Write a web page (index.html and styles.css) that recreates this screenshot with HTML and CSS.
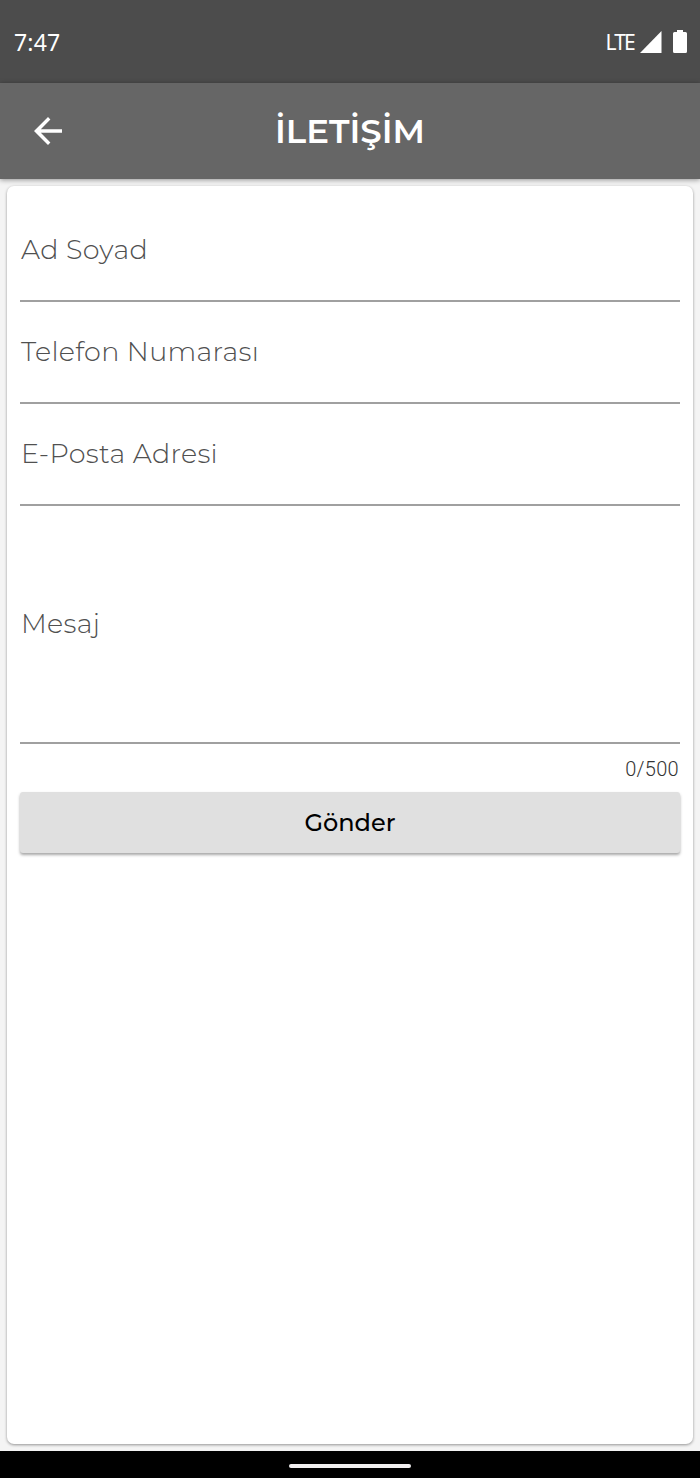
FILE: index.html
```html
<!DOCTYPE html>
<html lang="tr">

<head>
  <meta charset="UTF-8" />
  <title>İletişim</title>
  <link rel="stylesheet" href="styles.css">
</head>

<body>
  <div class="status-bar">
    <span class="time">7:47</span>
    <div class="status-icons">
      <span class="network">LTE</span>
      <svg class="signal" width="22" height="22" viewBox="0 0 22 22"><path d="M21.500 0v22H0z" fill="#fff" /></svg>
      <svg class="battery" width="14" height="23" viewBox="0 0 14 23"><path d="M4 0h6v2h2.500q1.500 0 1.500 1.500v18q0 1.500-1.500 1.500h-11Q0 23 0 21.500v-18Q0 2 1.500 2H4z" fill="#fff" /></svg>
    </div>
  </div>

  <header class="app-bar">
    <a class="back-btn" href="#" aria-label="Geri">
      <svg width="28" height="28" viewBox="0 0 28 28"><path d="M28 12.200v3.600H6.800l9.600 9.700L14 28 0 14 14 0l2.400 2.500-9.600 9.700z" fill="#fff" /></svg>
    </a>
    <h1>İLETİŞİM</h1>
  </header>

  <main>
    <form class="card">
      <div class="field">
        <label for="name">Ad Soyad</label>
        <input type="text" id="name" name="name">
      </div>
      <div class="field">
        <label for="phone">Telefon Numarası</label>
        <input type="tel" id="phone" name="phone">
      </div>
      <div class="field">
        <label for="email">E-Posta Adresi</label>
        <input type="email" id="email" name="email">
      </div>
      <div class="field message">
        <label for="message">Mesaj</label>
        <textarea id="message" name="message" maxlength="500"></textarea>
      </div>
      <div class="counter">0/500</div>
      <button class="send-btn" type="button">Gönder</button>
    </form>
  </main>

  <div class="nav-bar">
    <div class="home-handle"></div>
  </div>
</body>

</html>
```

FILE: styles.css
```css
* {
  box-sizing: border-box;
}

body {
  margin: 0;
  height: 1478px;
  display: flex;
  flex-direction: column;
  font-family: Montserrat, Inter, sans-serif;
  background-color: #f4f4f4;
  overflow: hidden;
}

.status-bar {
  height: 83px;
  padding: 0 13px;
  display: flex;
  justify-content: space-between;
  align-items: center;
  background-color: #4c4c4c;
  color: #fff;
  font-family: "Noto Sans", sans-serif;
}

.time {
  margin-top: 1px;
  margin-left: 1px;
  font-size: 23px;
  line-height: 30px;
  letter-spacing: 0.2px;
}

.status-icons {
  display: flex;
  align-items: center;
}

.network {
  margin-right: 6px;
  font-size: 21px;
  line-height: 30px;
  letter-spacing: -1.8px;
}

.battery {
  margin-left: 11px;
}

.app-bar {
  height: 96px;
  display: grid;
  grid-template-columns: 96px 1fr 96px;
  align-items: center;
  background-color: #666;
  box-shadow: 0 1px 5px rgba(0, 0, 0, 0.4);
  z-index: 1;
}

.back-btn {
  display: flex;
  justify-content: center;
}

h1 {
  margin: 0;
  color: #fff;
  font-size: 34px;
  font-weight: 600;
  line-height: 40px;
  text-align: center;
}

main {
  flex: 1;
  padding: 7px;
  display: flex;
}

.card {
  flex: 1;
  padding: 14px 13px;
  display: flex;
  flex-direction: column;
  background-color: #fff;
  border-radius: 7px;
  box-shadow: 0 1px 3px rgba(0, 0, 0, 0.4);
}

.field {
  position: relative;
  height: 102px;
  padding-top: 33px;
  border-bottom: 2px solid #a0a0a0;
}

.field label {
  display: block;
  width: max-content;
  padding-left: 1px;
  color: #505050;
  font-size: 27px;
  font-weight: 300;
  line-height: 34px;
  letter-spacing: 0.3px;
}

/* typing area covers the whole field */
.field input,
.field textarea {
  position: absolute;
  inset: 0;
  width: 100%;
  height: 100%;
  padding: 0;
  border: none;
  outline: none;
  resize: none;
  background: transparent;
  font: inherit;
  font-size: 27px;
}

.message {
  height: 238px;
  padding-top: 101px;
}

.counter {
  height: 30px;
  margin-top: 10px;
  padding-right: 1px;
  color: #333;
  font-family: Roboto, sans-serif;
  font-size: 20px;
  font-weight: 300;
  line-height: 30px;
  letter-spacing: 0.3px;
  text-align: right;
}

.send-btn {
  height: 61px;
  margin-top: 8px;
  padding: 0;
  border: none;
  border-radius: 3px;
  background-color: #e0e0e0;
  box-shadow: 0 2px 3px rgba(0, 0, 0, 0.35);
  color: #000;
  font-family: inherit;
  font-size: 24px;
  font-weight: 500;
  cursor: pointer;
}

.nav-bar {
  height: 27px;
  display: flex;
  align-items: center;
  justify-content: center;
  background-color: #000;
}

.home-handle {
  width: 122px;
  height: 4px;
  margin-top: 2px;
  border-radius: 2px;
  background-color: #f1eff0;
}
```
